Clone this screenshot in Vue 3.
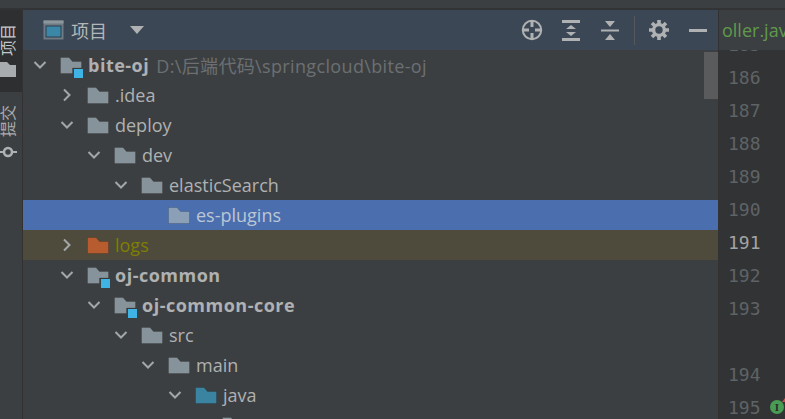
<script setup>
const rows = [
  { level: 0, name: 'bite-oj', arrow: 'down', kind: 'module', bold: true, path: 'D:\\后端代码\\springcloud\\bite-oj' },
  { level: 1, name: '.idea', arrow: 'right' },
  { level: 1, name: 'deploy', arrow: 'down' },
  { level: 2, name: 'dev', arrow: 'down' },
  { level: 3, name: 'elasticSearch', arrow: 'down' },
  { level: 4, name: 'es-plugins', selected: true },
  { level: 1, name: 'logs', arrow: 'right', kind: 'excluded' },
  { level: 1, name: 'oj-common', arrow: 'down', kind: 'module', bold: true },
  { level: 2, name: 'oj-common-core', arrow: 'down', kind: 'module', bold: true },
  { level: 3, name: 'src', arrow: 'down' },
  { level: 4, name: 'main', arrow: 'down' },
  { level: 5, name: 'java', arrow: 'down', kind: 'source' },
  { level: 6, name: '' }
]

const lines = [185, 186, 187, 188, 189, 190, 191, 192, 193, '', 194, 195]

const folderColor = (row) => {
  if (row.kind === 'excluded') return '#b65c2e'
  if (row.kind === 'source') return '#3a84a2'
  if (row.selected) return '#8ba0b7'
  return '#87939a'
}
</script>

<template>
  <div class="ide">
    <div class="topline"></div>
    <div class="main">
      <aside class="stripe">
        <div class="stripe-active">
          <span class="vtext">项目</span>
          <svg class="stripe-folder" width="16" height="15" viewBox="0 0 16 15">
            <path d="M-2 0h9l3 3h6v12H-2z" fill="#a9acae" />
          </svg>
        </div>
        <span class="vtext commit">提交</span>
        <svg class="commit-icon" width="17" height="12" viewBox="0 0 17 12">
          <circle cx="8" cy="6" r="4" fill="none" stroke="#aeb1b3" stroke-width="2.6" />
          <path d="M0 6h3M13 6h4" stroke="#aeb1b3" stroke-width="2" />
        </svg>
      </aside>

      <section class="project">
        <header class="head">
          <svg class="win" width="21" height="20" viewBox="0 0 21 20">
            <rect x="0.5" y="0.5" width="20" height="19" fill="#6e7a84" />
            <rect x="0.5" y="0.5" width="20" height="3" fill="#8d969c" />
            <rect x="3" y="6" width="15" height="11" fill="#3a87a8" stroke="#2c3e4c" />
          </svg>
          <span class="title">项目</span>
          <svg class="drop" width="14" height="8" viewBox="0 0 14 8"><path d="M0 0h14L7 8z" fill="#afb1b3" /></svg>
          <div class="tools">
            <span class="tool">
              <svg width="22" height="22" viewBox="0 0 22 22" fill="none" stroke="#afb1b3">
                <circle cx="11" cy="11" r="9.2" stroke-width="2" />
                <path d="M11 1v7M11 14v7M1 11h7M14 11h7" stroke-width="3" />
              </svg>
            </span>
            <span class="tool">
              <svg width="18" height="21" viewBox="0 0 18 21" fill="#afb1b3">
                <path d="M0 0h18v3H0zM0 18h18v3H0zM9 5l5 4H4zM9 16l-5-4h10z" />
              </svg>
            </span>
            <span class="tool">
              <svg width="18" height="19" viewBox="0 0 18 19" fill="#afb1b3">
                <path d="M4 0h10L9 6zM0 8.5h18v2H0zM9 13l5 6H4z" />
              </svg>
            </span>
            <i class="sep"></i>
            <span class="tool">
              <svg width="20" height="20" viewBox="0 0 20 20" fill="none" stroke="#afb1b3">
                <circle cx="10" cy="10" r="5.4" stroke-width="3.4" />
                <path d="M10 0v4M10 16v4M0 10h4M16 10h4M3 3l3 3M14 14l3 3M17 3l-3 3M6 14l-3 3" stroke-width="3.6" />
              </svg>
            </span>
            <span class="tool">
              <svg width="18" height="3" viewBox="0 0 18 3"><path d="M0 0h18v3H0z" fill="#afb1b3" /></svg>
            </span>
          </div>
        </header>

        <div class="tree">
          <div
            v-for="(row, i) in rows"
            :key="i"
            class="row"
            :class="{ selected: row.selected, excluded: row.kind === 'excluded' }"
            :style="{ paddingLeft: 6 + row.level * 27 + 'px' }"
          >
            <svg class="arrow" width="22" height="30" viewBox="0 0 22 30" fill="none" stroke="#a4a7a9" stroke-width="2">
              <path v-if="row.arrow === 'down'" d="M5.5 12l5.5 5.5 5.5-5.5" />
              <path v-if="row.arrow === 'right'" d="M8 9.5l5.5 5.5-5.5 5.5" />
            </svg>
            <span class="icon">
              <svg width="22" height="17" viewBox="0 0 22 17">
                <path
                  v-if="row.kind === 'module'"
                  d="M.5.5h8.500l3.500 4h9v6.500h-9v5.500H.5z"
                  :fill="folderColor(row)"
                  stroke="#000"
                  stroke-opacity=".15"
                />
                <path
                  v-else
                  d="M.5.5h8.500l3.500 4h9v12H.5z"
                  :fill="folderColor(row)"
                  stroke="#000"
                  stroke-opacity=".15"
                />
              </svg>
              <i v-if="row.kind === 'module'" class="badge"></i>
            </span>
            <span class="name" :class="{ bold: row.bold }">{{ row.name }}</span>
            <span v-if="row.path" class="path">{{ row.path }}</span>
          </div>
          <div class="thumb"></div>
        </div>
      </section>

      <section class="editor">
        <div class="tab"><span>oller.java</span></div>
        <div class="gutter">
          <div class="line" v-for="(n, i) in lines" :key="i" :class="{ current: n === 191 }">{{ n }}</div>
          <span class="mark">I</span>
          <i class="mark-arrow"></i>
        </div>
      </section>
    </div>
  </div>
</template>

<style scoped>
.ide {
  width: 785px;
  height: 419px;
  overflow: hidden;
  display: flex;
  flex-direction: column;
  background: #3c3f41;
  font-family: "Open Sans", "Noto Sans CJK SC", sans-serif;
}
.topline {
  height: 8px;
  flex: none;
  border-bottom: 2px solid #313335;
}
.main {
  flex: 1;
  display: flex;
  min-height: 0;
}
.stripe {
  width: 22px;
  flex: none;
  border-right: 1px solid #323232;
  display: flex;
  flex-direction: column;
  align-items: flex-start;
}
.stripe-active {
  width: 22px;
  height: 82px;
  background: #2d2f30;
  padding-top: 14px;
  box-sizing: border-box;
}
.vtext {
  display: block;
  writing-mode: vertical-rl;
  text-orientation: sideways;
  transform: rotate(180deg);
  font-size: 16px;
  line-height: 16px;
  color: #c4c7c9;
  width: 16px;
}
.stripe-folder {
  display: block;
  margin-top: 6px;
}
.commit {
  margin-top: 13px;
  color: #a9acae;
}
.commit-icon {
  margin-top: 9px;
}
.project {
  width: 695px;
  flex: none;
  display: flex;
  flex-direction: column;
  border-right: 1px solid #323232;
}
.head {
  height: 40px;
  flex: none;
  background: #3b4754;
  display: flex;
  align-items: center;
  padding: 0 1px 0 20px;
}
.title {
  font-size: 18px;
  color: #b4b7b9;
  margin-left: 7px;
}
.drop {
  margin-left: 23px;
}
.tools {
  margin-left: auto;
  display: flex;
  align-items: center;
}
.tool {
  width: 39px;
  display: flex;
  justify-content: center;
}
.sep {
  width: 1px;
  height: 29px;
  margin: 0 4px 0 5px;
  background: #55595c;
}
.tree {
  position: relative;
  flex: 1;
  overflow: hidden;
}
.row {
  height: 30px;
  display: flex;
  align-items: center;
  font-size: 18px;
  color: #afb1b3;
  white-space: nowrap;
}
.row.selected {
  background: #4b6eaf;
  color: #bbc6d4;
}
.row.excluded {
  background: #4e4b3d;
  color: #7f7f00;
}
.arrow {
  flex: none;
  margin-right: 9px;
}
.icon {
  position: relative;
  width: 22px;
  height: 17px;
  flex: none;
  margin-right: 6px;
}
.icon svg {
  display: block;
}
.badge {
  position: absolute;
  left: 14px;
  top: 12px;
  width: 9px;
  height: 9px;
  background: #3fb3e3;
}
.bold {
  font-weight: 700;
  letter-spacing: 0.5px;
}
.path {
  margin-left: 7px;
  letter-spacing: 0.35px;
  color: #6c6f71;
}
.thumb {
  position: absolute;
  right: 0;
  top: 2px;
  width: 14px;
  height: 47px;
  background: #595b5d;
}
.editor {
  flex: 1;
  display: flex;
  flex-direction: column;
  min-width: 0;
}
.tab {
  height: 40px;
  flex: none;
  overflow: hidden;
  padding-left: 3px;
  box-sizing: border-box;
  font-size: 18px;
  line-height: 40px;
  color: #5f9a4c;
  white-space: nowrap;
  background: #3c3f41;
}
.gutter {
  position: relative;
  flex: 1;
  overflow: hidden;
  background: #313335;
}
.line {
  height: 33px;
  line-height: 33px;
  padding-left: 9px;
  font-family: "DejaVu Sans Mono", monospace;
  font-size: 18px;
  color: #5f6365;
}
.line:first-child {
  margin-top: -22px;
}
.line.current {
  color: #a4a3a3;
}
.mark {
  position: absolute;
  left: 51px;
  top: 350px;
  width: 14px;
  height: 14px;
  border-radius: 50%;
  background: #499c54;
  color: #2b2b2b;
  font-family: "Liberation Serif", serif;
  font-size: 11px;
  font-weight: 700;
  line-height: 14px;
  text-align: center;
}
.mark-arrow {
  position: absolute;
  right: 0;
  top: 348px;
  border-bottom: 4px solid #c75450;
  border-left: 3px solid transparent;
}
</style>

<style>
html, body {
  margin: 0;
  background: #3c3f41;
}
</style>
